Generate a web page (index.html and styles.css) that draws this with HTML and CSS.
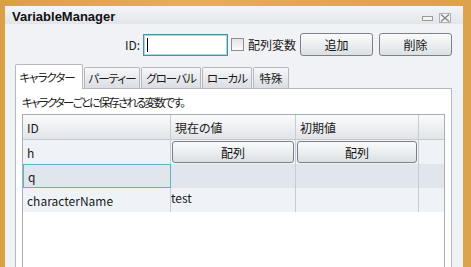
FILE: index.html
```html
<!DOCTYPE html>
<html lang="ja">
<head>
  <meta charset="UTF-8">
  <title>VariableManager</title>
  <link rel="stylesheet" href="styles.css">
</head>
<body>
  <div class="window">
    <div class="titlebar">
      <span class="title">VariableManager</span>
      <div class="win-buttons">
        <svg width="11" height="9" viewBox="0 0 11 9"><rect x="0.5" y="3.5" width="10" height="4" fill="#f4f4f4" stroke="#9a9a9a"/></svg>
        <svg width="12" height="10" viewBox="0 0 12 10"><rect x="0.5" y="0.5" width="11" height="9" fill="#f4f4f4" stroke="#b0b0b0"/><path d="M2 1.5 L10 8.5 M10 1.5 L2 8.5" stroke="#8a8a8a" stroke-width="1.6"/></svg>
      </div>
    </div>
    <div class="content">
      <div class="toolbar">
        <span class="id-label">ID:</span>
        <div class="id-input"><span class="caret"></span></div>
        <label class="check"><span class="box"></span>配列変数</label>
        <button class="btn">追加</button>
        <button class="btn second">削除</button>
      </div>
      <div class="tabs">
        <div class="tab active tab-chara">キャラクター</div>
        <div class="tab tab-party">パーティー</div>
        <div class="tab tab-global">グローバル</div>
        <div class="tab tab-local">ローカル</div>
        <div class="tab tab-special">特殊</div>
      </div>
      <div class="panel">
        <div class="desc">キャラクターごとに保存される変数です。</div>
        <div class="grid">
          <div class="row head">
            <div class="cell c-id">ID</div>
            <div class="cell c-cur">現在の値</div>
            <div class="cell c-init">初期値</div>
            <div class="cell c-fill"></div>
          </div>
          <div class="row">
            <div class="cell c-id">h</div>
            <div class="cell c-cur"><button class="cell-btn">配列</button></div>
            <div class="cell c-init"><button class="cell-btn">配列</button></div>
            <div class="cell c-fill"></div>
          </div>
          <div class="row selected">
            <div class="cell c-id focus">q</div>
            <div class="cell c-cur"></div>
            <div class="cell c-init"></div>
            <div class="cell c-fill"></div>
          </div>
          <div class="row">
            <div class="cell c-id">characterName</div>
            <div class="cell c-cur top">test</div>
            <div class="cell c-init"></div>
            <div class="cell c-fill"></div>
          </div>
        </div>
      </div>
    </div>
  </div>
</body>
</html>
```

FILE: styles.css
```css
body {
  margin: 0;
  height: 267px;
  overflow: hidden;
  background: linear-gradient(90deg, #d9a048 0%, #e6ae55 40%, #dca24a 100%);
  font-family: "Noto Sans CJK JP", "DejaVu Sans", sans-serif;
  font-feature-settings: "palt";
  font-size: 12px;
  color: #1a1a1a;
}

.window {
  margin: 6px 0 0 5px;
  width: 458px;
  height: 270px;
  background: #f0f2f5;
  border-top: 1px solid #f8f8f8;
  display: flex;
  flex-direction: column;
}

.titlebar {
  height: 21px;
  display: flex;
  align-items: center;
  justify-content: space-between;
  padding: 0 12px 0 7px;
  background: linear-gradient(#f2f4f6, #e2e5e9);
}

.title {
  font-family: "Liberation Sans", sans-serif;
  font-weight: bold;
  font-size: 13px;
  color: #111;
  padding-top: 2px;
}

.win-buttons {
  display: flex;
  gap: 6px;
  align-items: center;
  padding-top: 4px;
}

.content {
  flex: 1;
  display: flex;
  flex-direction: column;
  padding: 9px 11px 0 10px;
}

.toolbar {
  display: flex;
  align-items: center;
  justify-content: flex-end;
  height: 23px;
}

.id-label {
  margin-right: 3px;
}

.id-input {
  width: 79px;
  height: 20px;
  padding: 0 2px;
  border: 1px solid #4a8fa8;
  box-shadow: inset 0 0 0 1px #a8d6e4;
  background: #fff;
  display: flex;
  align-items: center;
}

.caret {
  width: 1px;
  height: 14px;
  background: #000;
  margin-left: 1px;
}

.check {
  display: flex;
  align-items: center;
  margin-left: 3px;
}

.box {
  width: 11px;
  height: 11px;
  border: 1px solid #8e8f8f;
  background: linear-gradient(#e4e4e4, #fbfbfb);
  margin-right: 4px;
}

.btn {
  width: 73px;
  height: 23px;
  margin-left: 4px;
  border: 1px solid #7c8088;
  border-radius: 3px;
  background: linear-gradient(#fafafa 0%, #eceef0 50%, #dcdfe3 100%);
  font-family: inherit;
  font-feature-settings: "palt";
  font-size: 12px;
  color: #111;
  padding: 0;
}

.btn.second {
  margin-left: 6px;
}

.tabs {
  display: flex;
  margin-top: 8px;
  height: 24px;
  align-items: flex-end;
}

.tab {
  box-sizing: border-box;
  height: 21px;
  display: flex;
  align-items: center;
  justify-content: center;
  border: 1px solid #b4b9c0;
  border-bottom: none;
  border-radius: 2px 2px 0 0;
  background: linear-gradient(#f6f7f8, #dadde2);
  margin-right: 1px;
  font-size: 11.5px;
  letter-spacing: -1px;
  white-space: nowrap;
}

.tab.active {
  height: 25px;
  background: #fff;
  margin-bottom: -1px;
  position: relative;
  padding-right: 4px;
}

.tab-chara { width: 68px; }
.tab-party { width: 56px; }
.tab-global { width: 60px; }
.tab-local { width: 50px; }
.tab-special { width: 36px; letter-spacing: 0; }

.panel {
  flex: 1;
  background: #fff;
  border: 1px solid #b4b9c0;
  padding: 5px 6px 0 6px;
}

.desc {
  height: 16px;
  line-height: 16px;
  margin-bottom: 4px;
  font-size: 11.5px;
  letter-spacing: -1.8px;
}

.grid {
  border: 1px solid #a9aeb5;
  border-bottom: none;
  height: 200px;
}

.row {
  display: flex;
  height: 24px;
  background: #eff3f8;
}

.row.head {
  background: linear-gradient(#fbfbfc, #e1e4e8);
  border-bottom: 1px solid #c5c9ce;
}

.row.selected {
  background: #e1e5ec;
}

.cell {
  border-right: 1px solid #c8ccd2;
  display: flex;
  align-items: center;
  padding-left: 4px;
  box-sizing: border-box;
}

.cell.top {
  align-items: flex-start;
  padding-left: 0;
}

.c-id { width: 149px; }
.c-cur { width: 126px; padding: 1px; }
.c-init { width: 124px; padding: 1px; }
.c-fill { width: 25px; border-right: none; }

.row.head .cell { padding-left: 4px; }

.cell.focus {
  border: 1px solid #5bb5c9;
}

.cell-btn {
  width: 100%;
  height: 22px;
  border: 1px solid #7c8088;
  border-radius: 3px;
  background: linear-gradient(#fafafa 0%, #eceef0 50%, #dcdfe3 100%);
  font-family: inherit;
  font-feature-settings: "palt";
  font-size: 12px;
  color: #111;
  padding: 0;
}
```
